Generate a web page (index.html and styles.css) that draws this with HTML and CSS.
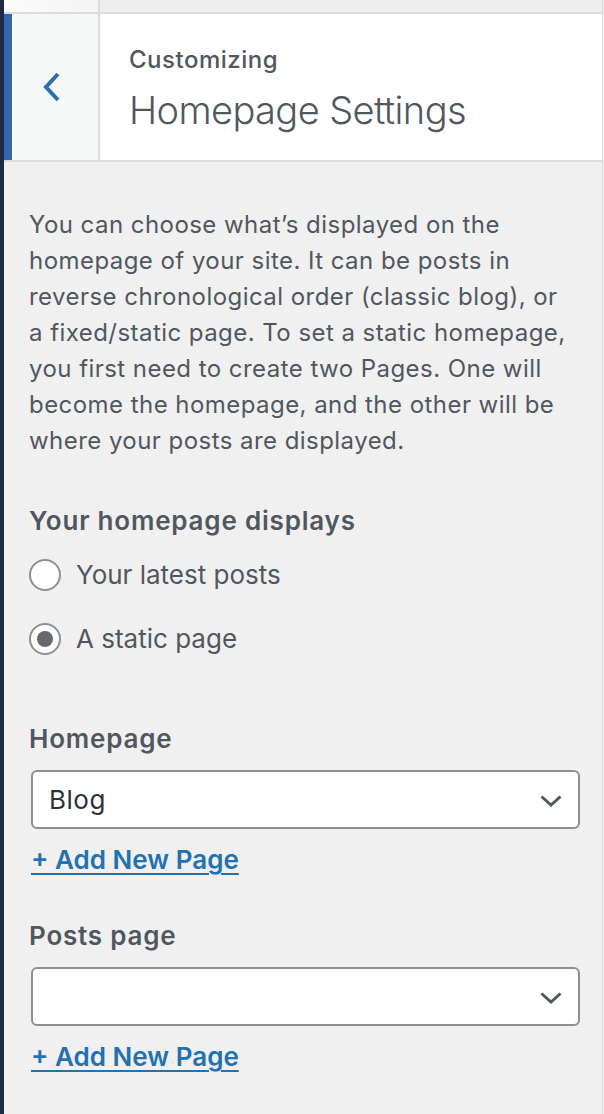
FILE: index.html
```html
<!DOCTYPE html>
<html lang="en">
<head>
<meta charset="utf-8">
<title>Customizing Homepage Settings</title>
<link rel="stylesheet" href="styles.css">
</head>
<body>
<div class="edge"></div>
<div class="panel">
  <div class="topstrip">
    <div class="topstrip-left"></div>
    <div class="topstrip-right"></div>
  </div>
  <div class="header">
    <button class="back" aria-label="Back">
      <svg width="20" height="30" viewBox="0 0 20 30"><polyline points="16,2 4,15 16,28" fill="none" stroke="#2f6db1" stroke-width="4"/></svg>
    </button>
    <div class="titles">
      <div class="action">Customizing</div>
      <h1 class="title">Homepage Settings</h1>
    </div>
  </div>
  <div class="content">
    <p class="desc">You can choose what’s displayed on the homepage of your site. It can be posts in reverse chronological order (classic blog), or a fixed/static page. To set a static homepage, you first need to create two Pages. One will become the homepage, and the other will be where your posts are displayed.</p>
    <div class="label label-displays">Your homepage displays</div>
    <label class="radio-row first"><span class="radio"></span><span class="radio-text">Your latest posts</span></label>
    <label class="radio-row second"><span class="radio checked"></span><span class="radio-text">A static page</span></label>

    <div class="label label-home">Homepage</div>
    <div class="select"><span class="select-value">Blog</span>
      <svg class="chev" width="22" height="12" viewBox="0 0 22 12"><polyline points="1.5,1.5 11,10 20.5,1.5" fill="none" stroke="#50575e" stroke-width="3"/></svg>
    </div>
    <a class="add" href="#">+ Add New Page</a>

    <div class="label label-posts">Posts page</div>
    <div class="select"><span class="select-value"></span>
      <svg class="chev" width="22" height="12" viewBox="0 0 22 12"><polyline points="1.5,1.5 11,10 20.5,1.5" fill="none" stroke="#50575e" stroke-width="3"/></svg>
    </div>
    <a class="add" href="#">+ Add New Page</a>
  </div>
</div>
<div class="beyond"></div>
</body>
</html>
```
FILE: styles.css
```css
html, body {
  margin: 0;
  padding: 0;
  height: 100%;
}
body {
  display: flex;
  background: #f0f0f1;
  font-family: Inter, "Noto Sans", sans-serif;
  color: #50575e;
  overflow: hidden;
}
.edge {
  width: 4px;
  flex: none;
  background: #1f2c46;
}
.panel {
  flex: 1;
  background: #f0f0f1;
  border-right: 1px solid #dcdcde;
  min-height: 1114px;
}
.beyond {
  width: 1px;
  flex: none;
  background: #f0f0f1;
}
.topstrip {
  display: flex;
  height: 12px;
  border-bottom: 2px solid #dcdcde;
}
.topstrip-left {
  width: 94px;
  background: linear-gradient(90deg, #fbfbfb, #f4f4f4);
  border-right: 2px solid #dcdcde;
}
.topstrip-right {
  flex: 1;
  background: #eeeeee;
}
.header {
  display: flex;
  height: 146px;
  border-bottom: 2px solid #dcdcde;
}
.back {
  width: 96px;
  flex: none;
  box-sizing: border-box;
  margin: 0;
  padding: 0 0 0 30px;
  background: #f6f7f7;
  border: none;
  border-left: 8px solid #3467a8;
  border-right: 2px solid #dcdcde;
  display: flex;
  align-items: center;
  cursor: pointer;
}
.titles {
  flex: 1;
  background: #fff;
  padding: 31px 0 0 29px;
}
.action {
  font-size: 24px;
  line-height: 30px;
  font-weight: 500;
  letter-spacing: 0.5px;
  color: #50575e;
}
.title {
  margin: 12px 0 0;
  font-size: 38px;
  line-height: 46px;
  font-weight: 300;
  letter-spacing: -0.6px;
  color: #50575e;
}
.content {
  padding: 45px 22px 0 25px;
  font-size: 24px;
  line-height: 36px;
}
.desc {
  margin: 0 5px 0 0;
  letter-spacing: 0.45px;
}
.label {
  font-size: 26px;
  font-weight: 600;
  letter-spacing: 0.8px;
  color: #50575e;
}
.label-displays { margin-top: 44px; }
.label-home { margin-top: 66px; }
.label-posts { margin-top: 39px; }
.radio-row {
  display: flex;
  align-items: center;
  gap: 15px;
  height: 32px;
  font-size: 26px;
}
.radio-row.first { margin-top: 20px; }
.radio-row.second { margin-top: 32px; }
.radio {
  width: 32px;
  height: 32px;
  box-sizing: border-box;
  border: 2px solid #8c8f94;
  border-radius: 50%;
  background: #fff;
  display: flex;
  align-items: center;
  justify-content: center;
  flex: none;
}
.radio.checked::after {
  content: "";
  width: 16px;
  height: 16px;
  border-radius: 50%;
  background: #646970;
}
.radio-text {
  color: #50575e;
}
.select {
  margin: 13px 0 0 2px;
  height: 59px;
  box-sizing: border-box;
  border: 2px solid #8c8f94;
  border-radius: 6px;
  background: #fff;
  display: flex;
  align-items: center;
  justify-content: space-between;
  padding: 0 16px 0 16px;
  font-size: 26px;
  letter-spacing: 0.5px;
}
.select-value {
  color: #2c3338;
}
.chev { flex: none; margin-top: 2px; }
.add {
  display: inline-block;
  margin-top: 13px;
  margin-left: 2px;
  font-size: 26px;
  color: #2271b1;
  font-weight: 600;
  text-decoration: underline;
  text-decoration-thickness: 2px;
  text-underline-offset: 4px;
}
```
